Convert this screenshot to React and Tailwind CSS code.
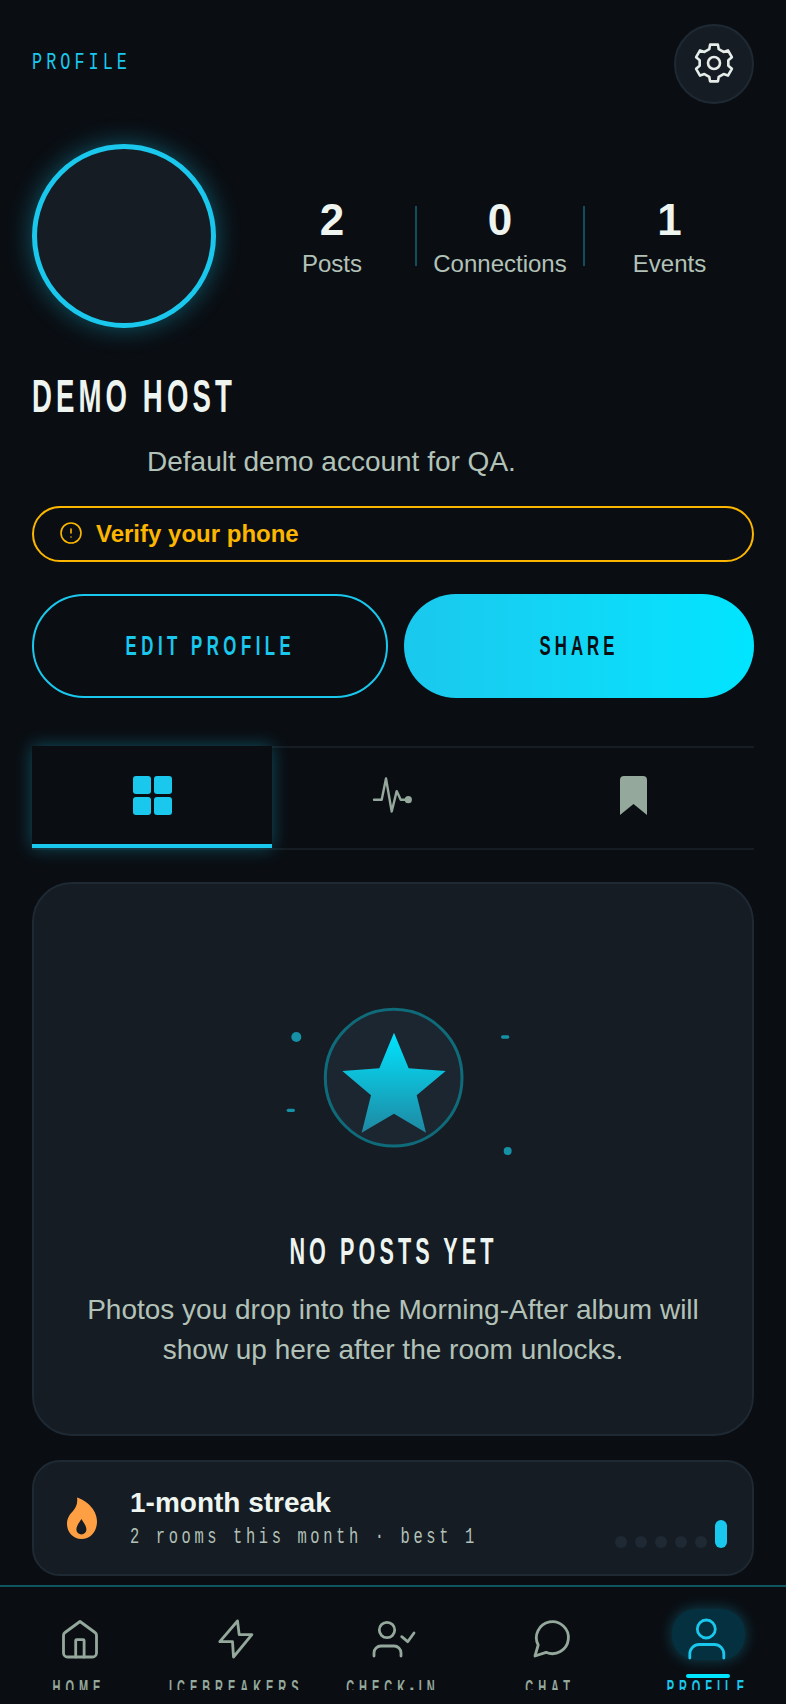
import React from "react";
import { CircleAlert } from "lucide-react";

const display = "inline-block whitespace-nowrap font-bold scale-x-[0.6]";
const mono = "inline-block whitespace-nowrap origin-left font-['Liberation_Mono',monospace]";

const stats = [
  { value: 2, label: "Posts" },
  { value: 0, label: "Connections" },
  { value: 1, label: "Events" },
];

// 46px box, all five tab icons were traced from the screenshot
const navIcons = {
  home: (
    <>
      <path d="M24 5.5 9 16.5a3.5 3.5 0 0 0-1.5 3V37a4 4 0 0 0 4 4h25a4 4 0 0 0 4-4V19.5a3.5 3.5 0 0 0-1.5-3Z" />
      <path d="M19.7 41V24.6a1 1 0 0 1 1-1h6.4a1 1 0 0 1 1 1V41" />
    </>
  ),
  zap: <path d="M24.5 5 6.8 25.7h12.7l1 15.3 18.4-22.3H26.2Z" />,
  check: (
    <>
      <circle cx="17" cy="14" r="7.7" />
      <path d="M4 40v-3a7 7 0 0 1 7-7h13a7 7 0 0 1 7 7v3" />
      <path d="m31.7 20.7 6 5L44 17" />
    </>
  ),
  chat: <path d="M8 40l3.2-11A16 16 0 1 1 19 36.3Z" />,
  user: (
    <>
      <circle cx="22.3" cy="13" r="9" />
      <path d="M5.8 42v-4a9.5 9.5 0 0 1 9.5-9.5h15a9.5 9.5 0 0 1 9.5 9.5v4" />
    </>
  ),
};

const nav = [
  { label: "HOME", icon: "home" },
  { label: "ICEBREAKERS", icon: "zap" },
  { label: "CHECK-IN", icon: "check" },
  { label: "CHAT", icon: "chat" },
  { label: "PROFILE", icon: "user", active: true },
];

function gearPath() {
  const pt = (r, deg) => {
    const a = (deg * Math.PI) / 180;
    return `${(23 + r * Math.cos(a)).toFixed(2)} ${(23 + r * Math.sin(a)).toFixed(2)}`;
  };
  const parts = [];
  for (let k = 0; k < 6; k++) {
    const a = k * 60 - 90;
    parts.push(pt(14.6, a - 19), pt(18.8, a - 12), pt(18.8, a + 12), pt(14.6, a + 19));
  }
  return "M" + parts.join("L") + "Z";
}

function StarBadge() {
  return (
    <svg width="290" height="210" viewBox="0 0 870 630" className="block ml-[4px]">
      <defs>
        <linearGradient id="starFill" x1="0" y1="0" x2="0" y2="1">
          <stop offset="0" stopColor="#00e5ff" />
          <stop offset="1" stopColor="#1f88a2" />
        </linearGradient>
      </defs>
      <circle cx="431" cy="293" r="205" fill="#1b2630" stroke="#0f6b7a" strokeWidth="9" />
      <polygon points="432,158 476,265 587,273 500,346 528,458 432,401 335,458 363,346 277,273 388,265" fill="url(#starFill)" />
      <circle cx="139" cy="171" r="15" fill="#1590a5" />
      <circle cx="773" cy="513" r="12" fill="#1590a5" />
      <rect x="753" y="166" width="25" height="10" rx="5" fill="#1590a5" />
      <rect x="110" y="386" width="25" height="10" rx="5" fill="#1590a5" />
    </svg>
  );
}

export default function App() {
  return (
    <div className="h-[1704px] w-full flex flex-col overflow-hidden bg-[#0a0e13] font-['Liberation_Sans',sans-serif] text-[#eef4f0]">
      <main className="flex-1 min-h-0 overflow-hidden px-8 pt-6">
        <header className="flex items-center justify-between">
          <span className={`${mono} text-[24px] tracking-[5.8px] scale-x-[0.7] text-[#1ac8ed] -mt-[3px]`}>PROFILE</span>
          <button className="w-20 h-20 rounded-full bg-[#151c23] border-2 border-[#1f2933] flex items-center justify-center">
            <svg width="46" height="46" viewBox="0 0 46 46" fill="none" stroke="#e6ede8" strokeWidth="2.6" strokeLinejoin="round" className="-mt-[2px]">
              <path d={gearPath()} />
              <circle cx="23" cy="23" r="6" />
            </svg>
          </button>
        </header>

        <section className="flex items-center mt-10">
          <div className="w-[184px] h-[184px] shrink-0 rounded-full bg-[#151c23] border-[5px] border-[#1ac8ed] shadow-[0_0_24px_rgba(26,200,237,0.4)]" />
          <div className="flex-1 flex items-center pl-[33px]">
            {stats.map((s, i) => (
              <React.Fragment key={s.label}>
                <div className={`${i === 2 ? "flex-1" : "w-[166px]"} flex flex-col items-center`}>
                  <span className="text-[44px] leading-[56px] font-bold">{s.value}</span>
                  <span className="text-[24px] leading-8 text-[#b3c2b8]">{s.label}</span>
                </div>
                {i < 2 && <span className="w-[2px] h-[60px] bg-[#0f4f5c]" />}
              </React.Fragment>
            ))}
          </div>
        </section>

        <h1 className="mt-[40px] h-[56px]">
          <span className={`${display} origin-left text-[46px] leading-[56px] tracking-[6.8px]`}>DEMO HOST</span>
        </h1>
        <p className="mt-[18px] pl-[115px] text-[28px] leading-[40px] text-[#b3c2b8]">Default demo account for QA.</p>

        <div className="mt-[24px] h-[56px] rounded-full border-2 border-[#fdb600] flex items-center pl-[25px] gap-[13px] text-[#fdb600]">
          <CircleAlert className="w-[24px] h-[24px] -mt-[2px]" strokeWidth={1.6} />
          <span className="text-[24px] font-bold">Verify your phone</span>
        </div>

        <div className="mt-8 flex gap-4">
          <button className="flex-1 h-[104px] rounded-full border-2 border-[#1ac8ed] text-[#1ac8ed] overflow-hidden">
            <span className={`${display} text-[28px] tracking-[7.5px]`}>EDIT PROFILE</span>
          </button>
          <button className="w-[350px] h-[104px] rounded-full bg-gradient-to-r from-[#1ac8ed] to-[#00e5ff] text-[#0a0e13]">
            <span className={`${display} text-[28px] tracking-[6.8px]`}>SHARE</span>
          </button>
        </div>

        <div className="mt-12 h-[104px] border-y-2 border-[#151c23] flex">
          <div className="w-[240px] -mt-[2px] border-b-4 border-[#1ac8ed] bg-[#0a0e13] flex items-center justify-center shadow-[0_0_16px_rgba(26,200,237,0.35)]">
            <div className="grid grid-cols-2 gap-[3px]">
              <span className="w-[18px] h-[18px] rounded-[3px] bg-[#1ac8ed]" />
              <span className="w-[18px] h-[18px] rounded-[3px] bg-[#1ac8ed]" />
              <span className="w-[18px] h-[18px] rounded-[3px] bg-[#1ac8ed]" />
              <span className="w-[18px] h-[18px] rounded-[3px] bg-[#1ac8ed]" />
            </div>
          </div>
          <div className="w-[240px] flex items-center justify-center">
            <svg width="40" height="36" viewBox="0 0 40 36" fill="none" stroke="#94a89c" strokeWidth="2.4" strokeLinejoin="round" strokeLinecap="round" className="mb-[6px]">
              <path d="M2 22.7h7.7L14 1.5l5.7 33 5-20.4 4 8.6h7" />
              <circle cx="36.3" cy="22.7" r="3.6" fill="#94a89c" stroke="none" />
            </svg>
          </div>
          <div className="flex-1 flex items-center justify-center">
            <svg width="27" height="39" viewBox="0 0 27 39" className="mb-[6px]"><path fill="#94a89c" d="M4 0h19a4 4 0 0 1 4 4v35L13.5 28 0 39V4a4 4 0 0 1 4-4z" /></svg>
          </div>
        </div>

        <section className="mt-8 h-[554px] rounded-[40px] bg-[#151c23] border-2 border-[#1f2933] flex flex-col items-center pt-[96px]">
          <StarBadge />
          <h2 className={`${display} mt-[40px] text-[36px] leading-[44px] tracking-[6.8px]`}>NO POSTS YET</h2>
          <p className="mt-[16px] w-[640px] text-center text-[28px] leading-[40px] text-[#b3c2b8]">Photos you drop into the Morning-After album will show up here after the room unlocks.</p>
        </section>

        <section className="mt-6 h-[116px] rounded-[28px] bg-[#151c23] border-2 border-[#1f2933] flex items-center pl-[33px] pr-[25px] gap-[33px]">
          <svg width="30" height="42" viewBox="0 0 30 42" className="shrink-0">
            <path fillRule="evenodd" fill="#ff9f43" d="M10 .5c8 2.5 20 11 20 24C30 35 23 42 14.5 42S0 35 0 27c0-6 3-10 6-13 3-3 5-8 4-13.5ZM14.4 22c-1.5 3-5 6.5-5 10.5a5 5 0 0 0 10 0c0-4-3.500-7.500-5-10.500Z" />
          </svg>
          <div className="flex-1 min-w-0">
            <div className="text-[28px] leading-9 font-bold mb-[3px]">1-month streak</div>
            <div className="leading-7">
              <span className={`${mono} text-[22px] tracking-[5.2px] scale-x-[0.7] text-[#b3c2b8]`}>2 rooms this month · best 1</span>
            </div>
          </div>
          <div className="flex items-end gap-2 self-end mb-[26px]">
            {[0, 1, 2, 3, 4].map(i => <span key={i} className="w-3 h-3 rounded-full bg-[#1f2933]" />)}
            <span className="w-3 h-7 rounded-full bg-[#1ac8ed]" />
          </div>
        </section>
      </main>

      <nav className="h-[119px] shrink-0 border-t-2 border-[#0f5560] bg-[#0a0e13] flex">
        {nav.map(({ label, icon, active }) => (
          <div key={label} className={`relative w-0 flex-1 h-[103px] overflow-y-clip flex flex-col items-center pt-[29px] ${active ? "text-[#1ac8ed]" : "text-[#94a89c]"}`}>
            {active && <span className="absolute top-[22px] left-[43px] w-[73px] h-[51px] rounded-[24px] bg-[#04303f] shadow-[0_0_14px_rgba(26,200,237,0.3)]" />}
            <svg width="46" height="46" viewBox="0 0 46 46" fill="none" stroke="currentColor" strokeWidth="2.8" strokeLinecap="round" strokeLinejoin="round" className="relative shrink-0">
              {navIcons[icon]}
            </svg>
            {active && <span className="absolute top-[87px] left-[57px] w-[44px] h-1 rounded-sm bg-[#00e5ff]" />}
            <span className="mt-[18px] text-[20px] leading-[15px] tracking-[9px] font-bold whitespace-nowrap inline-block scale-x-[0.55]">{label}</span>
          </div>
        ))}
      </nav>
    </div>
  );
}
